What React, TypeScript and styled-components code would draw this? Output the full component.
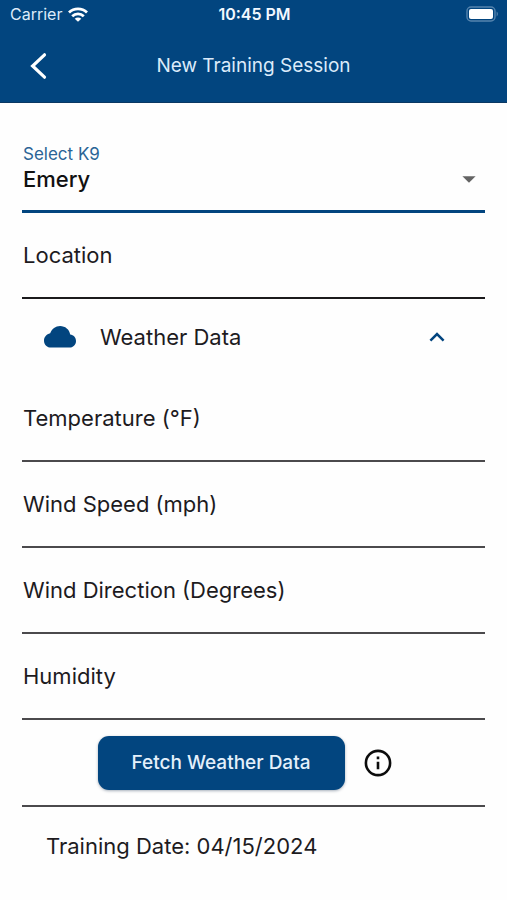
import React, { useState } from "react";
import styled, { createGlobalStyle } from "styled-components";

const blue = "#02457f";
const ink = "#1d1b1e";

const GlobalStyle = createGlobalStyle`
  *, *::before, *::after { box-sizing: border-box; }
  body {
    margin: 0;
    background: #fefefe;
    color: ${ink};
    font-family: Inter, "Liberation Sans", sans-serif;
  }
  button, input, select { font: inherit; color: inherit; }
`;

const Screen = styled.div`
  min-height: 100vh;
  background: #fefefe;
`;

const Header = styled.header`
  background: ${blue};
  border-bottom: 1px solid #0a3863;
  color: #dcebfa;
`;

const StatusBar = styled.div`
  display: grid;
  grid-template-columns: 1fr auto 1fr;
  align-items: center;
  height: 28px;
  padding: 0 8px 0 10px;
  font-size: 16px;
  line-height: 28px;
`;

const Carrier = styled.div`
  display: flex;
  align-items: center;
  gap: 6px;
`;

const Clock = styled.time`
  color: #f2f8ff;
  font-weight: 600;
`;

const BatterySlot = styled.div`
  display: flex;
  justify-content: flex-end;
`;

const NavBar = styled.div`
  display: grid;
  grid-template-columns: 48px 1fr 48px;
  align-items: center;
  height: 74px;
  padding: 2px 14px 0;
`;

const Title = styled.h1`
  margin: 0;
  font-size: 19px;
  font-weight: 400;
  line-height: 24px;
  text-align: center;
`;

const IconButton = styled.button`
  display: inline-flex;
  align-items: center;
  justify-content: center;
  width: 48px;
  height: 48px;
  padding: 0;
  border: 0;
  background: transparent;
  cursor: pointer;
`;

const Form = styled.form`
  display: flex;
  flex-direction: column;
  padding: 40px 22px 0;
`;

const SelectField = styled.div`
  display: grid;
  grid-template: 22px 28px / 1fr auto;
  align-items: center;
  align-content: start;
  height: 70px;
  border-bottom: 3px solid ${blue};
`;

const SelectLabel = styled.label`
  grid-column: 1 / -1;
  padding-left: 1px;
  color: #2a6496;
  font-size: 17px;
  line-height: 22px;
`;

const Select = styled.select`
  grid-area: 2 / 1 / 3 / 3;
  width: 100%;
  height: 28px;
  padding: 0 1px;
  border: 0;
  outline: 0;
  appearance: none;
  background: transparent;
  color: #111;
  font-size: 22px;
  font-weight: 500;
`;

const Caret = styled.svg`
  grid-area: 2 / 2 / 3 / 3;
  margin-right: 9px;
  pointer-events: none;
`;

const Field = styled.div<{ $strong?: boolean }>`
  display: grid;
  align-items: center;
  height: 86px;
  border-bottom: 2px solid ${(p) => (p.$strong ? "#1b1a1c" : "#4b4a4c")};
`;

const FieldLabel = styled.label<{ $hidden: boolean }>`
  grid-area: 1 / 1;
  padding-left: 1px;
  font-size: 22px;
  line-height: 28px;
  pointer-events: none;
  visibility: ${(p) => (p.$hidden ? "hidden" : "visible")};
`;

const TextInput = styled.input`
  grid-area: 1 / 1;
  width: 100%;
  height: 48px;
  padding: 0 1px;
  border: 0;
  outline: 0;
  background: transparent;
  font-size: 22px;
`;

const SectionToggle = styled.button`
  display: flex;
  align-items: center;
  gap: 23px;
  height: 77px;
  padding: 0 40px 2px 21px;
  border: 0;
  background: transparent;
  font-size: 22px;
  line-height: 28px;
  text-align: left;
  cursor: pointer;
`;

const SectionTitle = styled.span`
  flex: 1;
`;

const Actions = styled.div`
  display: flex;
  align-items: center;
  justify-content: center;
  gap: 9px;
  height: 87px;
  padding-right: 8px;
  border-bottom: 2px solid #4b4a4c;
`;

const FetchButton = styled.button`
  height: 54px;
  padding: 0 34px;
  border: 0;
  border-radius: 11px;
  background: ${blue};
  box-shadow: 0 1px 3px rgba(0, 30, 60, 0.35);
  color: #e4f0fb;
  font-size: 19px;
  font-weight: 500;
  cursor: pointer;
`;

const DateRow = styled.p`
  margin: 0;
  padding: 25px 24px;
  font-size: 22px;
  line-height: 28px;
`;

function TextField({ id, label, strong }: { id: string; label: string; strong?: boolean }) {
  const [value, setValue] = useState("");
  return (
    <Field $strong={strong}>
      <FieldLabel htmlFor={id} $hidden={value !== ""}>{label}</FieldLabel>
      <TextInput id={id} value={value} onChange={(e) => setValue(e.target.value)} />
    </Field>
  );
}

const weatherFields = [
  { id: "temperature", label: "Temperature (°F)" },
  { id: "wind-speed", label: "Wind Speed (mph)" },
  { id: "wind-direction", label: "Wind Direction (Degrees)" },
  { id: "humidity", label: "Humidity" },
];

export default function App() {
  const [open, setOpen] = useState(true);
  return (
    <Screen>
      <GlobalStyle />
      <Header>
        <StatusBar>
          <Carrier>
            Carrier
            <svg width="20" height="15" viewBox="0 0 20 15" fill="none" stroke="#fff" strokeWidth="2.8" aria-hidden="true">
              <path d="M1 5.4C6 .6 14 .6 19 5.4" />
              <path d="M4.2 9.2c3.3-3.2 8.3-3.2 11.6 0" />
              <path d="M10 14.8 6.7 11.7c1.9-1.5 4.7-1.5 6.6 0z" fill="#fff" stroke="none" />
            </svg>
          </Carrier>
          <Clock>10:45 PM</Clock>
          <BatterySlot>
            <svg width="33" height="16" viewBox="0 0 33 16" fill="none" aria-hidden="true">
              <rect x="1" y="1" width="28" height="14" rx="4" stroke="#5584ae" strokeWidth="1.4" />
              <rect x="3" y="3" width="24" height="10" rx="2" fill="#fff" />
              <path d="M30.6 5.6c1.7.7 1.7 4.1 0 4.8z" fill="#5584ae" />
            </svg>
          </BatterySlot>
        </StatusBar>
        <NavBar>
          <IconButton type="button" aria-label="Back">
            <svg width="20" height="28" viewBox="0 0 20 28" fill="none" stroke="#fff" strokeWidth="3.2" aria-hidden="true">
              <path d="M16.5 2.8 4.6 14l11.9 11.2" strokeLinejoin="miter" strokeLinecap="round" />
            </svg>
          </IconButton>
          <Title>New Training Session</Title>
        </NavBar>
      </Header>
      <Form onSubmit={(e) => e.preventDefault()}>
        <SelectField>
          <SelectLabel htmlFor="k9">Select K9</SelectLabel>
          <Select id="k9" defaultValue="Emery">
            <option>Emery</option>
          </Select>
          <Caret width="14" height="7" viewBox="0 0 14 7" aria-hidden="true">
            <path d="M.4.3h13.2L7 6.8z" fill="#646464" />
          </Caret>
        </SelectField>
        <TextField id="location" label="Location" strong />
        <SectionToggle type="button" aria-expanded={open} onClick={() => setOpen(!open)}>
          <svg width="34" height="24" viewBox="0 0 34 24" aria-hidden="true">
            <path
              d="M8.3 22.6C4.2 22.6 1 19.7 1 15.7 1 12 3.5 9.2 7.2 8.3 8.8 4 12.6 1 17.1 1c5.1 0 9.3 3.5 10.1 8.5 3.3.3 5.8 3 5.8 6.4 0 3.8-3 6.7-6.8 6.7z"
              fill={blue}
            />
          </svg>
          <SectionTitle>Weather Data</SectionTitle>
          <svg width="16" height="10" viewBox="0 0 16 10" fill="none" stroke={blue} strokeWidth="2.5" aria-hidden="true">
            <path d={open ? "M1.4 8.6 8 2l6.6 6.6" : "M1.4 1.4 8 8l6.6-6.6"} />
          </svg>
        </SectionToggle>
        {open && weatherFields.map((f) => <TextField key={f.id} id={f.id} label={f.label} />)}
        <Actions>
          <FetchButton type="button">Fetch Weather Data</FetchButton>
          <IconButton type="button" aria-label="Weather data information">
            <svg width="28" height="28" viewBox="0 0 28 28" fill="none" stroke="#0c0c0c" strokeWidth="2.6" aria-hidden="true">
              <circle cx="14" cy="14" r="12.1" />
              <path d="M14 12.7v7.6M14 7.5v2.7" />
            </svg>
          </IconButton>
        </Actions>
        <DateRow>
          Training Date: <time dateTime="2024-04-15">04/15/2024</time>
        </DateRow>
      </Form>
    </Screen>
  );
}
